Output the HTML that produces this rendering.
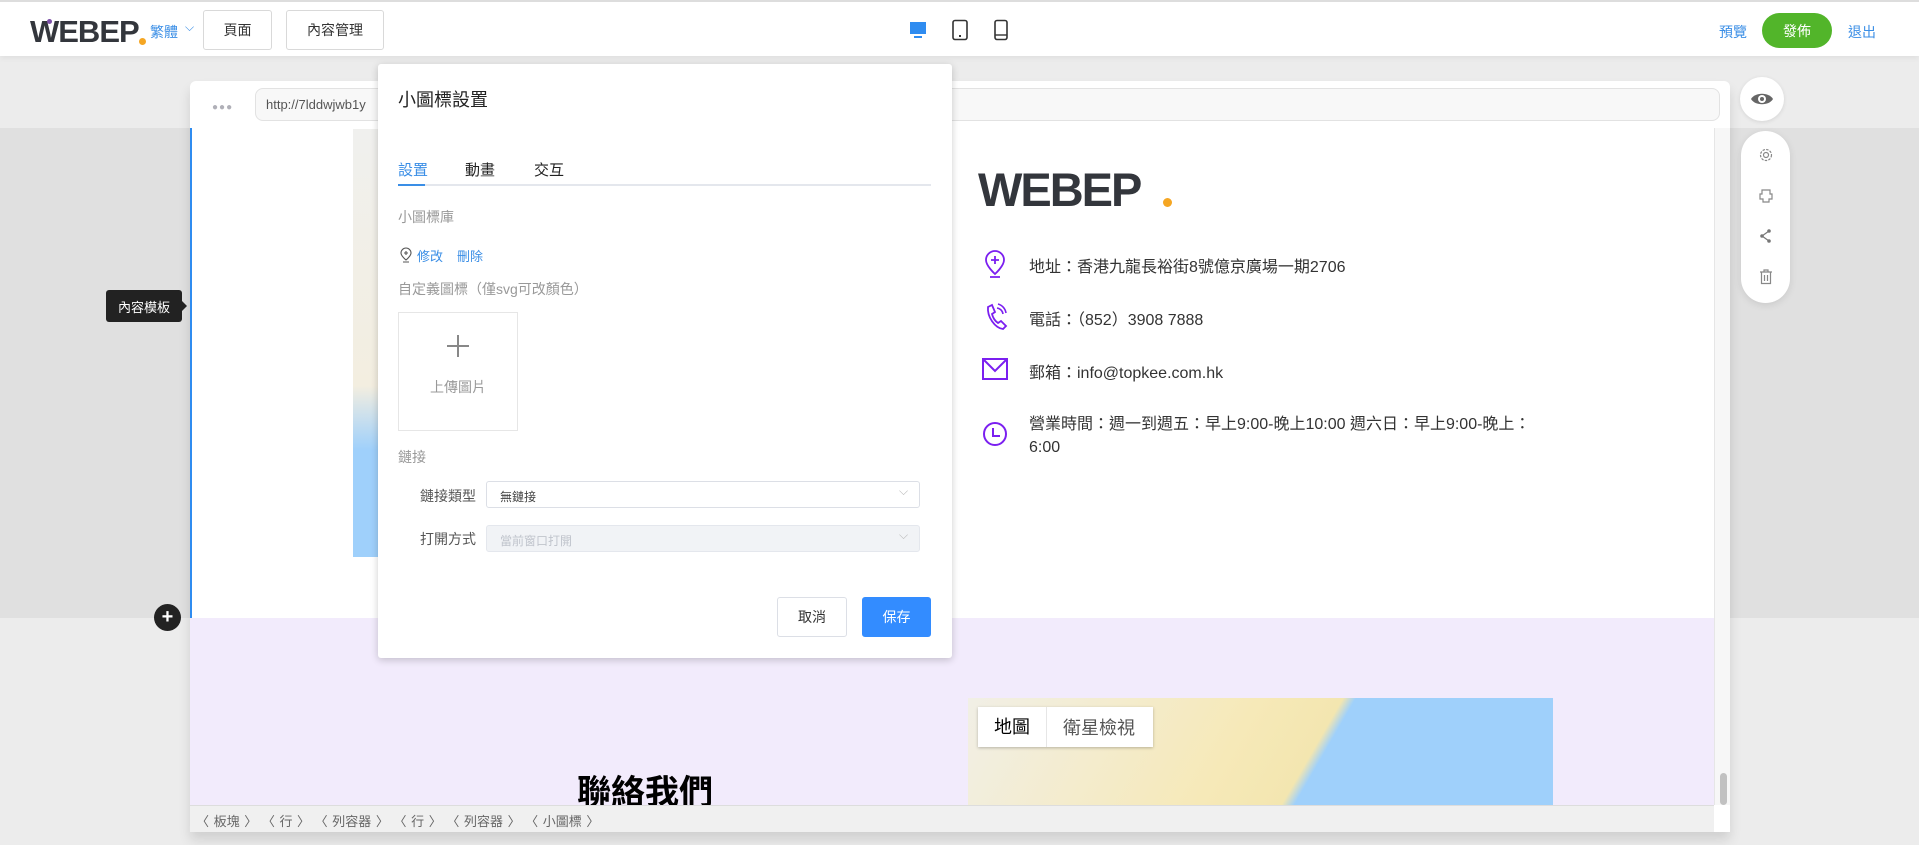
<!DOCTYPE html>
<html><head><meta charset="utf-8">
<style>
*{box-sizing:border-box;margin:0;padding:0}
body{width:1919px;height:845px;overflow:hidden;background:#ececec;font-family:"Liberation Sans","Noto Sans CJK TC",sans-serif;color:#333;position:relative}
.abs{position:absolute}
.top{left:0;top:0;width:1919px;height:56px;background:#fff;border-top:2px solid #ddd;box-shadow:0 2px 6px rgba(0,0,0,.06)}
.btn{position:absolute;border:1px solid #d9d9d9;border-radius:3px;background:#fff;font-size:14px;display:flex;align-items:center;justify-content:center;color:#333}
.band{left:0;top:128px;width:1919px;height:490px;background:#e0e0e0}
.frame{left:190px;top:81px;width:1540px;height:751px;background:#fff;border-radius:6px 6px 0 0;box-shadow:0 8px 12px rgba(0,0,0,.12)}
.t14{font-size:14px}
</style></head><body>
<div class="abs top">
  <div class="abs" style="left:30px;top:12px;font-size:31px;font-weight:bold;color:#33363c;letter-spacing:-1px;font-family:'Liberation Sans',sans-serif">WEBEP</div>
  <div class="abs" style="left:47px;top:17px;width:5px;height:5px;border-radius:50%;background:#7b4fa6"></div>
  <div class="abs" style="left:139px;top:36px;width:7px;height:7px;border-radius:50%;background:#f5a623"></div>
  <div class="abs" style="left:150px;top:20px;font-size:14px;color:#3a8ee6">繁體</div>
  <div class="abs" style="left:185px;top:18px;font-size:12px;color:#3a8ee6">⌵</div>
  <div class="btn" style="left:203px;top:8px;width:69px;height:40px">頁面</div>
  <div class="btn" style="left:286px;top:8px;width:98px;height:40px">內容管理</div>
  <svg class="abs" style="left:908px;top:18px" width="20" height="20" viewBox="0 0 20 20"><rect x="2" y="2" width="16" height="12" fill="#2f8cf0"/><rect x="6" y="16" width="8" height="2" fill="#2f8cf0"/></svg>
  <svg class="abs" style="left:951px;top:17px" width="18" height="22" viewBox="0 0 18 22"><rect x="2" y="1.5" width="14" height="19" rx="2" fill="none" stroke="#333" stroke-width="1.6"/><rect x="8" y="16" width="2" height="2" fill="#333"/></svg>
  <svg class="abs" style="left:993px;top:17px" width="16" height="22" viewBox="0 0 16 22"><rect x="2" y="1.5" width="12" height="19" rx="2" fill="none" stroke="#333" stroke-width="1.6"/><line x1="2" y1="16" x2="14" y2="16" stroke="#333" stroke-width="1.4"/></svg>
  <div class="abs" style="left:1719px;top:20px;font-size:14px;color:#3a8ee6">預覽</div>
  <div class="abs" style="left:1762px;top:11px;width:70px;height:35px;border-radius:18px;background:#52b52a;color:#fff;font-size:14px;display:flex;align-items:center;justify-content:center">發佈</div>
  <div class="abs" style="left:1848px;top:20px;font-size:14px;color:#3a8ee6">退出</div>
</div>
<div class="abs band"></div>
<div class="abs frame">
  <div class="abs" style="left:22px;top:21px;font-size:10px;color:#b0b0b8;letter-spacing:1px">●●●</div>
  <div class="abs" style="left:65px;top:7px;width:1465px;height:33px;border:1px solid #e2e2e2;border-radius:8px;background:#f8f8f8;font-size:13px;color:#555;padding:8px 10px">http://7lddwjwb1y</div>
  <div class="abs" style="left:0;top:47px;width:1524px;height:490px;background:#fff;border-left:2px solid #2f8cf0"></div>
  <div class="abs" style="left:163px;top:48px;width:26px;height:428px;background:linear-gradient(#f0f0ee 0,#f3eee0 60%,#9fd0fb 75%,#9fd0fb 100%)"></div>
  <div class="abs" style="left:0;top:537px;width:1524px;height:187px;background:#f2ebfc"></div>
  <div class="abs" style="left:1524px;top:47px;width:16px;height:677px;background:#f7f7f7;border-left:1px solid #e6e6e6"></div>
  <div class="abs" style="left:1530px;top:692px;width:7px;height:32px;border-radius:4px;background:#c1c1c1"></div>
  <!-- right content -->
  <div class="abs" style="left:788px;top:81px;font-size:47px;font-weight:bold;color:#33363c;letter-spacing:-2px">WEBEP</div>
  <div class="abs" style="left:973px;top:117px;width:9px;height:9px;border-radius:50%;background:#f5a623"></div>
  <svg class="abs" style="left:792px;top:168px" width="26" height="30" viewBox="0 0 26 30"><path d="M13 2a9 9 0 0 1 9 9c0 6-9 14-9 14S4 17 4 11a9 9 0 0 1 9-9z" fill="none" stroke="#7b1ff0" stroke-width="1.8"/><path d="M13 7v8M9 11h8M8 28h10" stroke="#7b1ff0" stroke-width="1.8"/></svg>
  <div class="abs t14" style="left:839px;top:172px;font-size:16px">地址：香港九龍長裕街8號億京廣場一期2706</div>
  <svg class="abs" style="left:792px;top:221px" width="26" height="30" viewBox="0 0 26 30"><path d="M6 5l4-2 3 7-3 2c1 4 3 7 6 9l3-2 5 5-3 3C13 26 5 15 6 5z" fill="none" stroke="#7b1ff0" stroke-width="1.8"/><path d="M15 6a7 7 0 0 1 6 6M16 2a11 11 0 0 1 8 9" fill="none" stroke="#7b1ff0" stroke-width="1.6"/></svg>
  <div class="abs" style="left:839px;top:225px;font-size:16px">電話：（852）3908 7888</div>
  <svg class="abs" style="left:791px;top:276px" width="28" height="24" viewBox="0 0 28 24"><rect x="2" y="2" width="24" height="20" fill="none" stroke="#7b1ff0" stroke-width="2"/><path d="M3 3l11 11L25 3" fill="none" stroke="#7b1ff0" stroke-width="2"/></svg>
  <div class="abs" style="left:839px;top:278px;font-size:16px">郵箱：info@topkee.com.hk</div>
  <svg class="abs" style="left:792px;top:340px" width="26" height="26" viewBox="0 0 26 26"><circle cx="13" cy="13" r="11" fill="none" stroke="#7b1ff0" stroke-width="2"/><path d="M11 7v8h7" fill="none" stroke="#7b1ff0" stroke-width="2"/></svg>
  <div class="abs" style="left:839px;top:332px;font-size:16px;line-height:23px;width:520px">營業時間：週一到週五：早上9:00-晚上10:00 週六日：早上9:00-晚上：<br>6:00</div>
  <!-- lower -->
  <div class="abs" style="left:778px;top:617px;width:585px;height:107px;background:linear-gradient(120deg,#f1efe6 0,#f6e9b8 45%,#f3e6b0 58%,#9fd0fb 60%,#9fd0fb 100%)"></div>
  <div class="abs" style="left:788px;top:626px;width:175px;height:40px;background:#fff;box-shadow:0 1px 3px rgba(0,0,0,.25);font-size:18px;display:flex;align-items:center"><span style="padding:0 16px;color:#000;border-right:1px solid #e6e6e6;line-height:40px">地圖</span><span style="padding:0 16px;color:#555">衛星檢視</span></div>
  <div class="abs" style="left:387px;top:684px;font-size:34px;font-weight:bold;color:#000">聯絡我們</div>
  <div class="abs" style="left:0;top:724px;width:1524px;height:27px;background:#f0f0f0;border-top:1px solid #ddd;font-size:13px;color:#666;padding:5px 6px;word-spacing:1px">〈 板塊 〉 〈 行 〉 〈 列容器 〉 〈 行 〉 〈 列容器 〉 〈 小圖標 〉</div>
</div>
<div class="abs" style="left:106px;top:290px;width:76px;height:32px;background:#222;color:#fff;font-size:13px;border-radius:3px;display:flex;align-items:center;justify-content:center">內容模板</div>
<div class="abs" style="left:182px;top:301px;border:5px solid transparent;border-left-color:#222"></div>
<div class="abs" style="left:154px;top:604px;width:27px;height:27px;border-radius:50%;background:#222;color:#fff;font-size:20px;line-height:26px;text-align:center;font-weight:bold">+</div>
<!-- right tools -->
<div class="abs" style="left:1740px;top:77px;width:44px;height:44px;border-radius:50%;background:#fff;box-shadow:0 1px 4px rgba(0,0,0,.1)"></div>
<svg class="abs" style="left:1750px;top:89px" width="24" height="20" viewBox="0 0 24 20"><path d="M1 10C5 3 19 3 23 10 19 17 5 17 1 10z" fill="#666"/><circle cx="12" cy="10" r="4" fill="#fff"/><circle cx="12" cy="10" r="2" fill="#666"/></svg>
<div class="abs" style="left:1741px;top:131px;width:49px;height:172px;border-radius:25px;background:#fff;box-shadow:0 2px 8px rgba(0,0,0,.1)"></div>
<svg class="abs" style="left:1758px;top:147px" width="16" height="16" viewBox="0 0 16 16"><circle cx="8" cy="8" r="5.5" fill="none" stroke="#888" stroke-width="1.2" stroke-dasharray="2.5 1.2"/><circle cx="8" cy="8" r="2.5" fill="none" stroke="#888" stroke-width="1.2"/></svg>
<svg class="abs" style="left:1758px;top:188px" width="16" height="16" viewBox="0 0 16 16"><path d="M4 2h8v4h2v5h-3v3H5v-3H2V6h2z" fill="none" stroke="#888" stroke-width="1.2"/></svg>
<svg class="abs" style="left:1758px;top:228px" width="16" height="16" viewBox="0 0 16 16"><circle cx="11" cy="3" r="1.8" fill="#777"/><circle cx="4" cy="8" r="1.8" fill="#777"/><circle cx="11" cy="13" r="1.8" fill="#777"/><path d="M11 3L4 8l7 5" fill="none" stroke="#777" stroke-width="1.2"/></svg>
<svg class="abs" style="left:1758px;top:269px" width="16" height="16" viewBox="0 0 16 16"><path d="M2 3h12M6 3V1h4v2M3.5 3.5v11h9v-11M6.5 6v6M9.5 6v6" fill="none" stroke="#888" stroke-width="1.2"/></svg>
<!-- dialog -->
<div class="abs" style="left:378px;top:64px;width:574px;height:594px;background:#fff;border-radius:3px;box-shadow:0 2px 8px rgba(0,0,0,.2)">
  <div class="abs" style="left:20px;top:22px;font-size:18px;color:#222">小圖標設置</div>
  <div class="abs" style="left:20px;top:95px;font-size:15px;color:#3a8ee6">設置</div>
  <div class="abs" style="left:87px;top:95px;font-size:15px;color:#222">動畫</div>
  <div class="abs" style="left:156px;top:95px;font-size:15px;color:#222">交互</div>
  <div class="abs" style="left:20px;top:120px;width:533px;height:2px;background:#e4e7ed"></div>
  <div class="abs" style="left:20px;top:120px;width:27px;height:2px;background:#3a8ee6"></div>
  <div class="abs t14" style="left:20px;top:143px;color:#999">小圖標庫</div>
  <svg class="abs" style="left:21px;top:183px" width="14" height="16" viewBox="0 0 14 16"><path d="M7 1a5 5 0 0 1 5 5c0 3-5 7-5 7S2 9 2 6a5 5 0 0 1 5-5z M7 4v4M5 6h4M4 15h6" fill="none" stroke="#555" stroke-width="1.1"/></svg>
  <div class="abs" style="left:39px;top:182px;font-size:13px;color:#3a8ee6">修改</div>
  <div class="abs" style="left:79px;top:182px;font-size:13px;color:#3a8ee6">刪除</div>
  <div class="abs t14" style="left:20px;top:215px;color:#999">自定義圖標（僅svg可改顏色）</div>
  <div class="abs" style="left:20px;top:248px;width:120px;height:119px;border:1px solid #e6e6e6">
    <div class="abs" style="left:48px;top:22px;width:22px;height:22px"><div class="abs" style="left:10px;top:0;width:1.5px;height:22px;background:#888"></div><div class="abs" style="left:0;top:10px;width:22px;height:1.5px;background:#888"></div></div>
    <div class="abs" style="left:0;top:64px;width:118px;text-align:center;font-size:14px;color:#999">上傳圖片</div>
  </div>
  <div class="abs t14" style="left:20px;top:383px;color:#999">鏈接</div>
  <div class="abs t14" style="left:42px;top:422px;color:#555">鏈接類型</div>
  <div class="abs" style="left:108px;top:417px;width:434px;height:27px;border:1px solid #dcdfe6;border-radius:3px;font-size:12px;color:#444;padding:6px 13px">無鏈接</div>
  <div class="abs" style="left:521px;top:420px;font-size:12px;color:#bbb">⌵</div>
  <div class="abs t14" style="left:42px;top:465px;color:#555">打開方式</div>
  <div class="abs" style="left:108px;top:461px;width:434px;height:27px;border:1px solid #e4e7ed;border-radius:3px;background:#f1f3f6;font-size:12px;color:#c0c4cc;padding:6px 13px">當前窗口打開</div>
  <div class="abs" style="left:521px;top:464px;font-size:12px;color:#bbb">⌵</div>
  <div class="abs" style="left:399px;top:533px;width:70px;height:40px;border:1px solid #dcdfe6;border-radius:3px;font-size:14px;color:#333;display:flex;align-items:center;justify-content:center">取消</div>
  <div class="abs" style="left:484px;top:533px;width:69px;height:40px;background:#338cff;border-radius:3px;font-size:14px;color:#fff;display:flex;align-items:center;justify-content:center">保存</div>
</div>
</body></html>
